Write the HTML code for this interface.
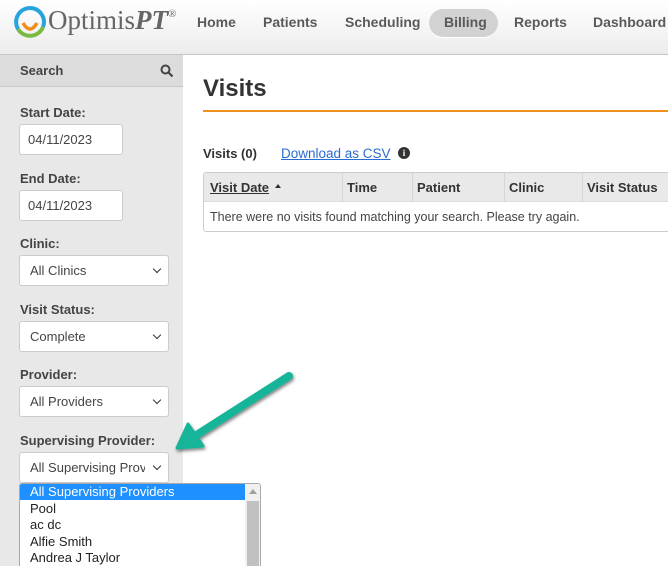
<!DOCTYPE html>
<html style="width:668px;height:566px;overflow:hidden"><head><style>
*{box-sizing:border-box;margin:0;padding:0}
body{width:668px;height:566px;overflow:hidden;font-family:"Liberation Sans",Arial,sans-serif;background:#fff;position:relative;color:#333}
.a{position:absolute}
#hdr{left:0;top:0;width:668px;height:55px;background:linear-gradient(#fff,#ececec);border-bottom:1px solid #c6c6c6}
.nav{top:14px;font-size:14px;font-weight:bold;color:#5a5a5a}
#side{left:0;top:55px;width:183px;height:511px;background:#e8e8e8}
#sh{left:0;top:55px;width:183px;height:32px;background:#dcdcdc;border-bottom:1px solid #c8c8c8}
.lbl{left:20px;font-size:13px;font-weight:bold;color:#444}
.inp{left:19px;height:31px;background:#fff;border:1px solid #ccc;border-radius:3px;font-size:13px;color:#444;padding:7px 0 0 8px}
.sel{width:150px;padding-left:10px}
.sel:after{content:"";position:absolute;right:8px;top:10px;width:5px;height:5px;border-right:1.5px solid #333;border-bottom:1.5px solid #333;transform:rotate(45deg)}
.it{left:30px;font-size:13px;color:#222}
</style></head><body>
<div id="hdr" class="a"></div>
<svg class="a" style="left:13px;top:5px" width="34" height="34" viewBox="0 0 34 34">
<path d="M17 3 A14 14 0 0 0 5 24" stroke="#27a4dc" stroke-width="4" fill="none"/>
<path d="M5 24 A14 14 0 0 0 30 22" stroke="#7ab943" stroke-width="4" fill="none"/>
<path d="M30 22 A14 14 0 0 0 17 3" stroke="#27a4dc" stroke-width="4" fill="none"/>
<path d="M10 18 Q17 30 24 18" stroke="#f28c1e" stroke-width="3.5" fill="none"/>
</svg>
<div class="a" style="left:48px;top:5px;font-family:'Liberation Serif',serif;font-size:27px;color:#666">Optimis<i style="font-weight:bold">PT</i><sup style="font-size:11px;vertical-align:top;position:relative;top:3px">®</sup></div>
<div class="a nav" style="left:197px">Home</div>
<div class="a nav" style="left:263px">Patients</div>
<div class="a nav" style="left:345px">Scheduling</div>
<div class="a" style="left:429px;top:9px;width:69px;height:28px;border-radius:14px;background:#d2d2d2;box-shadow:0 1px 0 #fff"></div>
<div class="a nav" style="left:444px">Billing</div>
<div class="a nav" style="left:514px">Reports</div>
<div class="a nav" style="left:593px">Dashboard</div>
<div id="side" class="a"></div>
<div id="sh" class="a"></div>
<div class="a" style="left:20px;top:63px;font-size:13px;font-weight:bold;color:#444">Search</div>
<svg class="a" style="left:160px;top:64px" width="14" height="14" viewBox="0 0 14 14"><circle cx="5.5" cy="5.5" r="4" stroke="#444" stroke-width="2" fill="none"/><path d="M8.5 8.5L12.5 12.5" stroke="#444" stroke-width="2.2"/></svg>
<div class="a lbl" style="top:105px">Start Date:</div>
<div class="a inp" style="top:124px;width:104px">04/11/2023</div>
<div class="a lbl" style="top:171px">End Date:</div>
<div class="a inp" style="top:190px;width:104px">04/11/2023</div>
<div class="a lbl" style="top:236px">Clinic:</div>
<div class="a inp sel" style="top:255px">All Clinics</div>
<div class="a lbl" style="top:302px">Visit Status:</div>
<div class="a inp sel" style="top:321px">Complete</div>
<div class="a lbl" style="top:367px">Provider:</div>
<div class="a inp sel" style="top:386px">All Providers</div>
<div class="a lbl" style="top:433px">Supervising Provider:</div>
<div class="a inp sel" style="top:452px;white-space:nowrap;overflow:hidden"><span style="display:block;width:115px;overflow:hidden">All Supervising Providers</span></div>
<div class="a" style="left:19px;top:483px;width:242px;height:83px;background:#fff;border:1px solid #aaa;border-bottom:0;border-radius:3px 3px 0 0;overflow:hidden">
<div class="a" style="left:0;top:0;width:225px;height:16px;background:#1e90ff"></div>
<div class="a" style="left:225px;top:0;width:16px;height:90px;background:#f0f0f0"></div>
<div class="a" style="left:227px;top:17px;width:12px;height:80px;background:#c1c1c1"></div>
<div class="a" style="left:229px;top:5px;width:0;height:0;border:4px solid transparent;border-bottom:5px solid #a0a0a0;border-top:0"></div>
</div>
<div class="a it" style="top:484px;color:#fff">All Supervising Providers</div>
<div class="a it" style="top:501px">Pool</div>
<div class="a it" style="top:517px">ac dc</div>
<div class="a it" style="top:534px">Alfie Smith</div>
<div class="a it" style="top:550px">Andrea J Taylor</div>
<div class="a" style="left:203px;top:75px;font-size:24px;font-weight:bold;color:#333">Visits</div>
<div class="a" style="left:203px;top:110px;width:465px;height:2px;background:#f0901e"></div>
<div class="a" style="left:203px;top:146px;font-size:13px;font-weight:bold;color:#333">Visits (0)</div>
<div class="a" style="left:281px;top:146px;font-size:13.5px;color:#2a6ccf;text-decoration:underline">Download as CSV</div>
<div class="a" style="left:398px;top:147px;width:12px;height:12px;border-radius:50%;background:#333;color:#fff;font-size:9px;font-weight:bold;text-align:center;line-height:12px;font-family:'Liberation Serif',serif">i</div>
<div class="a" style="left:203px;top:172px;width:470px;height:60px;border:1px solid #ccc;border-radius:3px;overflow:hidden">
<div class="a" style="left:0;top:0;width:470px;height:29px;background:#e9e9e9;border-bottom:1px solid #ddd"></div>
<div class="a" style="left:138px;top:0;width:1px;height:29px;background:#d6d6d6"></div>
<div class="a" style="left:208px;top:0;width:1px;height:29px;background:#d6d6d6"></div>
<div class="a" style="left:300px;top:0;width:1px;height:29px;background:#d6d6d6"></div>
<div class="a" style="left:378px;top:0;width:1px;height:29px;background:#d6d6d6"></div>
<div class="a" style="left:6px;top:7px;font-size:13px;font-weight:bold;text-decoration:underline">Visit Date</div>
<div class="a" style="left:71px;top:11px;width:0;height:0;border:3.5px solid transparent;border-bottom:4px solid #333;border-top:0"></div>
<div class="a" style="left:143px;top:7px;font-size:13px;font-weight:bold">Time</div>
<div class="a" style="left:213px;top:7px;font-size:13px;font-weight:bold">Patient</div>
<div class="a" style="left:305px;top:7px;font-size:13px;font-weight:bold">Clinic</div>
<div class="a" style="left:383px;top:7px;font-size:13px;font-weight:bold">Visit Status</div>
<div class="a" style="left:6px;top:37px;font-size:12.5px;color:#444">There were no visits found matching your search. Please try again.</div>
</div>
<svg class="a" style="left:170px;top:365px" width="130" height="95" viewBox="170 365 130 95">
<defs><filter id="s"><feDropShadow dx="1" dy="2" stdDeviation="1.5" flood-opacity="0.5"/></filter></defs>
<g filter="url(#s)">
<path d="M289 376 L195 436" stroke="#17b59a" stroke-width="8" stroke-linecap="round"/>
<path d="M177 448 L188 424 L203 446 Z" fill="#17b59a" stroke="#17b59a" stroke-width="3" stroke-linejoin="round"/>
</g></svg>
</body></html>
